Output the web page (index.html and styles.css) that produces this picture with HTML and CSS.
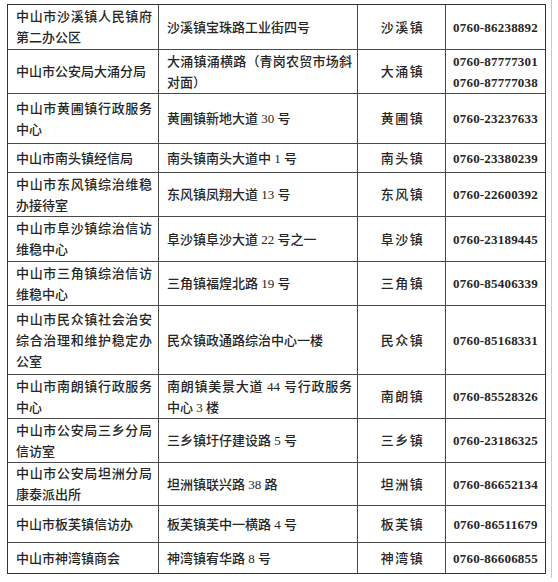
FILE: index.html
```html
<!DOCTYPE html>
<html lang="zh-CN">
<head>
<meta charset="utf-8">
<title>中山市信访接待点</title>
<link rel="stylesheet" href="styles.css">
</head>
<body>
<div class="page">
  <div class="grid">
    <div class="c name">中山市沙溪镇人民镇府第二办公区</div>
    <div class="c addr">沙溪镇宝珠路工业街四号</div>
    <div class="c town">沙溪镇</div>
    <div class="c tel">0760-86238892</div>

    <div class="c name">中山市公安局大涌分局</div>
    <div class="c addr">大涌镇涌横路（青岗农贸市场斜对面）</div>
    <div class="c town">大涌镇</div>
    <div class="c tel">0760-87777301<br>0760-87777038</div>

    <div class="c name">中山市黄圃镇行政服务中心</div>
    <div class="c addr">黄圃镇新地大道 30 号</div>
    <div class="c town">黄圃镇</div>
    <div class="c tel">0760-23237633</div>

    <div class="c name">中山市南头镇经信局</div>
    <div class="c addr">南头镇南头大道中 1 号</div>
    <div class="c town">南头镇</div>
    <div class="c tel">0760-23380239</div>

    <div class="c name">中山市东风镇综治维稳办接待室</div>
    <div class="c addr">东风镇凤翔大道 13 号</div>
    <div class="c town">东风镇</div>
    <div class="c tel">0760-22600392</div>

    <div class="c name">中山市阜沙镇综治信访维稳中心</div>
    <div class="c addr">阜沙镇阜沙大道 22 号之一</div>
    <div class="c town">阜沙镇</div>
    <div class="c tel">0760-23189445</div>

    <div class="c name">中山市三角镇综治信访维稳中心</div>
    <div class="c addr">三角镇福煌北路 19 号</div>
    <div class="c town">三角镇</div>
    <div class="c tel">0760-85406339</div>

    <div class="c name">中山市民众镇社会治安综合治理和维护稳定办公室</div>
    <div class="c addr">民众镇政通路综治中心一楼</div>
    <div class="c town">民众镇</div>
    <div class="c tel">0760-85168331</div>

    <div class="c name">中山市南朗镇行政服务中心</div>
    <div class="c addr">南朗镇美景大道 44 号行政服务中心 3 楼</div>
    <div class="c town">南朗镇</div>
    <div class="c tel">0760-85528326</div>

    <div class="c name">中山市公安局三乡分局信访室</div>
    <div class="c addr">三乡镇圩仔建设路 5 号</div>
    <div class="c town">三乡镇</div>
    <div class="c tel">0760-23186325</div>

    <div class="c name">中山市公安局坦洲分局康泰派出所</div>
    <div class="c addr">坦洲镇联兴路 38 路</div>
    <div class="c town">坦洲镇</div>
    <div class="c tel">0760-86652134</div>

    <div class="c name">中山市板芙镇信访办</div>
    <div class="c addr">板芙镇芙中一横路 4 号</div>
    <div class="c town">板芙镇</div>
    <div class="c tel">0760-86511679</div>

    <div class="c name">中山市神湾镇商会</div>
    <div class="c addr">神湾镇宥华路 8 号</div>
    <div class="c town">神湾镇</div>
    <div class="c tel">0760-86606855</div>
  </div>
</div>
</body>
</html>
```

FILE: styles.css
```css
html, body {
  margin: 0;
  padding: 0;
  background: #fff;
}

.page {
  box-sizing: border-box;
  width: 552px;
  height: 578px;
  padding: 4px 0 0 7px;
  border-right: 1px solid #c8c8c8;
}

.grid {
  display: grid;
  width: 539px;
  box-sizing: border-box;
  grid-template-columns: 150px 198px 87px 99px;
  grid-template-rows: 44px 43px 49px 28px 43px 44px 43px 68px 43px 43px 42px 36px 30px;
  gap: 1px;
  border: 1px solid #333;
  background: #4a4a4a;
  font-family: "Liberation Serif", "Noto Sans CJK SC", serif;
  font-size: 13px;
  line-height: 21px;
  font-weight: 500;
  color: #262626;
}

.c {
  background: #fff;
  display: flex;
  align-items: center;
  box-sizing: border-box;
}

.name {
  padding: 0 6px 0 8px;
  text-align: justify;
}

.addr {
  padding: 0 5px 0 8px;
  text-align: justify;
}

.town {
  justify-content: center;
  letter-spacing: 1.5px;
  padding-left: 2px;
}

.tel {
  justify-content: center;
  text-align: center;
  font-weight: bold;
  font-size: 13px;
  letter-spacing: 0.2px;
}
```
